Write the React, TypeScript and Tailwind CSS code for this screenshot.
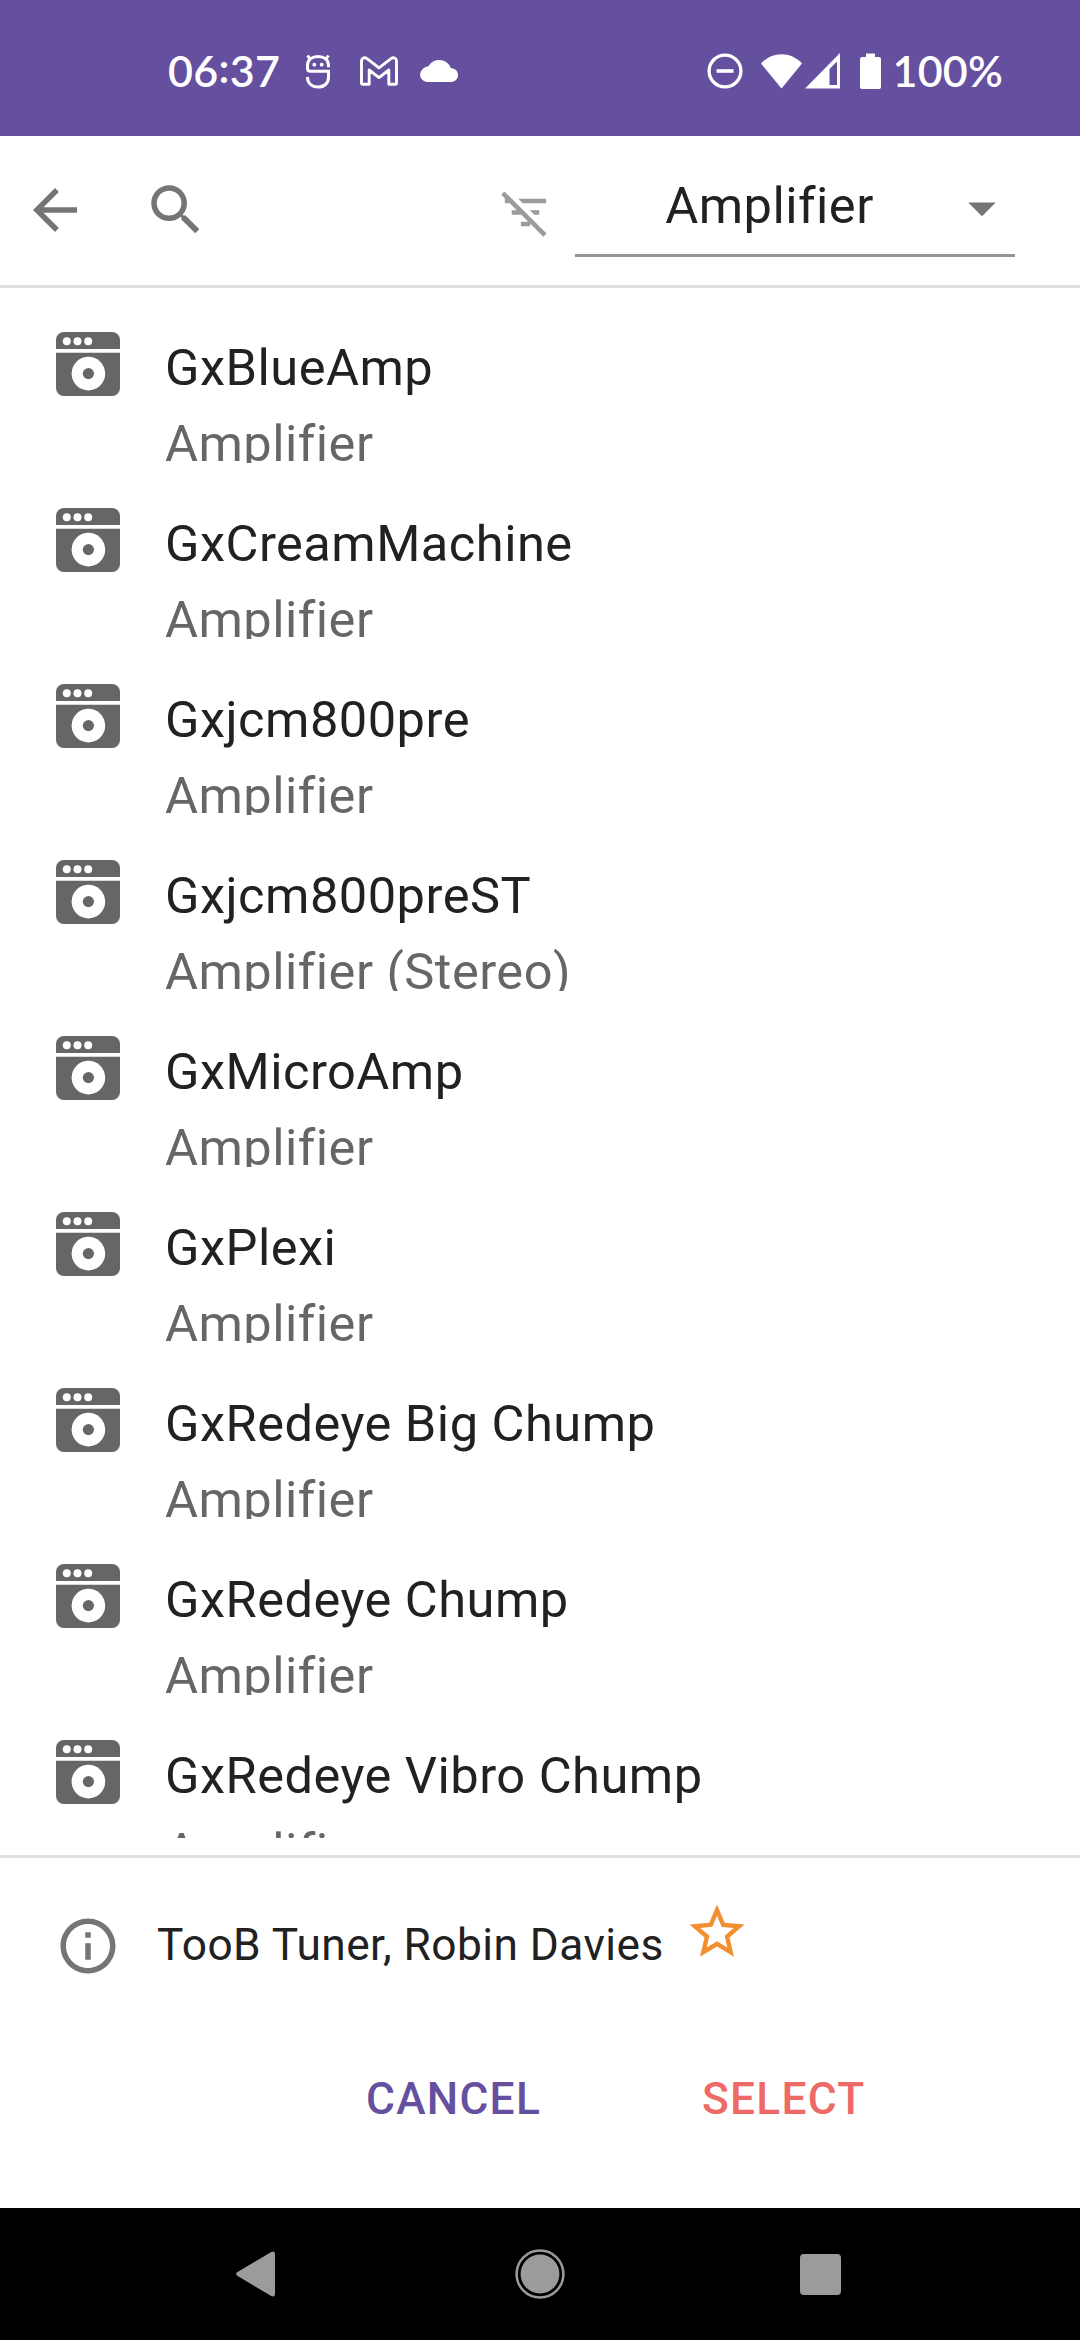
const plugins = [
  { name: "GxBlueAmp", type: "Amplifier" },
  { name: "GxCreamMachine", type: "Amplifier" },
  { name: "Gxjcm800pre", type: "Amplifier" },
  { name: "Gxjcm800preST", type: "Amplifier (Stereo)" },
  { name: "GxMicroAmp", type: "Amplifier" },
  { name: "GxPlexi", type: "Amplifier" },
  { name: "GxRedeye Big Chump", type: "Amplifier" },
  { name: "GxRedeye Chump", type: "Amplifier" },
  { name: "GxRedeye Vibro Chump", type: "Amplifier" },
];

function Icon({ d, className }: { d: string; className: string }) {
  return (
    <svg viewBox="0 0 24 24" fill="currentColor" className={`shrink-0 ${className}`}>
      <path d={d} />
    </svg>
  );
}

function AmpIcon() {
  return (
    <svg viewBox="0 0 64 64" className="mt-[2px] h-16 w-16 shrink-0 text-[#666666]">
      <path fill="currentColor" d="M0 17V8a8 8 0 0 1 8-8h48a8 8 0 0 1 8 8v9zM0 20.8h64V56a8 8 0 0 1-8 8H8a8 8 0 0 1-8-8z" />
      <g fill="white">
        <circle cx="10.8" cy="9.2" r="4" />
        <circle cx="21.5" cy="9.2" r="4" />
        <circle cx="32.2" cy="9.2" r="4" />
        <circle cx="32.4" cy="41.6" r="16.8" />
      </g>
      <circle cx="32.4" cy="41.6" r="5.6" fill="currentColor" />
    </svg>
  );
}

function StatusBar() {
  return (
    <header className="flex h-[136px] shrink-0 items-center bg-[#64509e] pt-[6px] pr-[77px] pl-[168px] font-['Lato'] text-[43px] leading-[60px] font-semibold text-white">
      <span className="w-[138px] shrink-0 tracking-[0.3px] whitespace-nowrap">
        06<span className="relative -top-[4px]">:</span>37
      </span>
      <svg viewBox="0 0 24 35" className="h-[35px] w-6 shrink-0" fill="none" stroke="white" strokeWidth="3">
        <path d="M1.500 11.500C1.500 5.500 6 2.500 12 2.500s10.500 3 10.500 9M1.500 10v4.200c0 2 1.200 3 3 3h18v6.300c0 6-4.500 9.500-10.500 9.500S1.500 29.500 1.500 23M22.500 10v3.200M4 5 1.500 1.500M20 5 22.500 1.500" />
        <g fill="white" stroke="none">
          <circle cx="8.300" cy="10.700" r="1.900" />
          <circle cx="15.700" cy="10.700" r="1.900" />
        </g>
      </svg>
      <svg viewBox="0 0 38 30" className="ml-[30px] h-[30px] w-[38px] shrink-0" fill="none" stroke="white" strokeWidth="2.9" strokeLinejoin="round">
        <path d="M1.500 27V5C1.500 2 4.500 .8 7 2.600L19 11.800 31 2.600C33.500 .8 36.500 2 36.500 5V27q0 1.300-1.300 1.300H28.800V14L19 21.600 9.200 14V28.300H2.800Q1.500 28.300 1.500 27z" />
      </svg>
      <Icon className="ml-[22px] h-[38px] w-[38px]" d="M19.350 10.040A7.490 7.490 0 0 0 12 5C9.110 5 6.600 6.640 5.350 9.040A5.994 5.994 0 0 0 0 14c0 3.310 2.690 5 6 5h13c2.760 0 5-1.740 5-4.500 0-2.640-2.050-4.280-4.650-4.460z" />
      <div className="ml-auto flex items-center">
        <svg viewBox="0 0 36 36" className="h-9 w-9" fill="none" stroke="white" strokeWidth="3.300">
          <circle cx="18" cy="18" r="15.900" />
          <path d="M9.500 18h17" strokeWidth="3.600" />
        </svg>
        <svg viewBox="0 0 41 35" className="ml-[18px] h-[35px] w-[41px]" fill="white">
          <path d="M0 9.500C5.500 3.500 13 .3 20.500.3S35.500 3.500 41 9.500L20.500 34.500z" />
        </svg>
        <svg viewBox="0 0 35 36" className="ml-[3px] h-9 w-[35px]" fill="white">
          <path fillRule="evenodd" d="M35 0V35.500H0zM32 8.500 24.500 16V32H32z" />
        </svg>
        <svg viewBox="0 0 21 36" className="ml-5 h-9 w-[21px]" fill="white">
          <path d="M6 .5h9V4h4a2 2 0 0 1 2 2v28a2 2 0 0 1-2 2H2a2 2 0 0 1-2-2V6a2 2 0 0 1 2-2h4z" />
        </svg>
        <span className="ml-[12px] tracking-[0.2px] whitespace-nowrap">100%</span>
      </div>
    </header>
  );
}

function Toolbar() {
  return (
    <div className="flex h-[152px] shrink-0 items-start border-b-[3px] border-[#e0e0e0] pl-[22px] text-[#757575]">
      <Icon className="mt-[41px] h-[66px] w-[66px]" d="M20 11H7.830l5.590-5.590L12 4l-8 8 8 8 1.410-1.410L7.830 13H20v-2z" />
      <Icon className="mt-[41px] ml-[55px] h-[66px] w-[66px]" d="M15.500 14h-.79l-.28-.27C15.410 12.590 16 11.110 16 9.500 16 5.910 13.090 3 9.500 3S3 5.910 3 9.500 5.910 16 9.500 16c1.610 0 3.090-.59 4.230-1.570l.27.28v.79l5 4.990L20.490 19l-4.990-5zm-6 0C7.010 14 5 11.990 5 9.500S7.010 5 9.500 5 14 7.010 14 9.500 11.990 14 9.500 14z" />
      <Icon className="mt-[49px] ml-[289px] h-[55px] w-[55px] text-[#9b9b9b]" d="M10.830 8H21V6H8.830l2 2zm5 5H18v-2h-4.170l2 2zM14 16.830V18h-4v-2h3.170l-3-3H6v-2h2.170l-3-3H3V6h.17L1.390 4.220 2.800 2.810l18.380 18.380-1.410 1.410L14 16.830z" />
      <div className="ml-[22px] flex h-[121px] w-[440px] items-start border-b-[3px] border-[#949494] pt-[32px]">
        <span className="w-[374px] pl-[15px] text-center text-[50.6px] leading-[76px] tracking-[0.00938em] text-[#212121]">Amplifier</span>
        <Icon className="mt-[7px] h-[66px] w-[66px]" d="M7 10l5 5 5-5z" />
      </div>
    </div>
  );
}

export default function App() {
  return (
    <div className="flex h-[2340px] w-[1080px] flex-col overflow-hidden bg-white font-['Roboto',sans-serif] text-[#212121]">
      <StatusBar />
      <Toolbar />
      <main className="mb-[17px] h-[1550px] shrink-0 overflow-hidden pt-[42px]">
        {plugins.map((p) => (
          <div key={p.name} className="flex h-[176px] items-start pl-14">
            <AmpIcon />
            <div className="ml-[45px] h-[133px] overflow-hidden text-[50.6px] leading-[76px] tracking-[0.00938em] whitespace-nowrap">
              <p>{p.name}</p>
              <p className="text-[#666666]">{p.type}</p>
            </div>
          </div>
        ))}
      </main>
      <footer className="flex h-[353px] shrink-0 flex-col border-t-[3px] border-[#e0e0e0]">
        <div className="flex h-[174px] items-start pl-[55px]">
          <Icon className="mt-[55px] h-[66px] w-[66px] text-[#757575]" d="M11 7h2v2h-2zm0 4h2v6h-2zm1-9C6.480 2 2 6.480 2 12s4.480 10 10 10 10-4.480 10-10S17.520 2 12 2zm0 18c-4.410 0-8-3.590-8-8s3.590-8 8-8 8 3.590 8 8-3.590 8-8 8z" />
          <span className="mt-[54px] ml-[36px] w-[527px] whitespace-nowrap text-[44.275px] leading-[66px] tracking-[0.01em]">TooB Tuner, Robin Davies</span>
          <Icon className="mt-[41px] h-[66px] w-[66px] text-[#f28f30]" d="M22 9.240l-7.190-.62L12 2 9.190 8.630 2 9.240l5.460 4.730L5.820 21 12 17.270 18.180 21l-1.630-7.030L22 9.240zM12 15.400l-3.760 2.270 1-4.280-3.320-2.880 4.380-.38L12 6.100l1.710 4.040 4.380.38-3.320 2.880 1 4.280L12 15.400z" />
        </div>
        <div className="flex pl-[366px] text-[44.275px] leading-[78px] font-medium tracking-[0.02857em]">
          <button className="mt-[28px] w-[336px] text-left text-[#64509e]">CANCEL</button>
          <button className="mt-[28px] text-left text-[#ee6a66]">SELECT</button>
        </div>
      </footer>
      <nav className="flex h-[132px] shrink-0 items-center bg-black pl-[236px] text-[#9b9b9b]">
        <svg viewBox="0 0 39 46" className="h-[46px] w-[39px]" fill="currentColor">
          <path d="M1.200 21.200 34.800 1.200Q39-.8 39 3.500v39q0 4.300-4.200 2.300L1.200 24.800Q-.8 23 1.200 21.200z" />
        </svg>
        <svg viewBox="0 0 50 50" className="ml-[240px] h-[50px] w-[50px]">
          <circle cx="25" cy="25" r="23.400" fill="none" stroke="currentColor" strokeWidth="2.500" />
          <circle cx="25" cy="25" r="19.400" fill="currentColor" />
        </svg>
        <div className="ml-[235px] h-[41px] w-[41px] rounded-[4px] bg-[#9b9b9b]" />
      </nav>
    </div>
  );
}
